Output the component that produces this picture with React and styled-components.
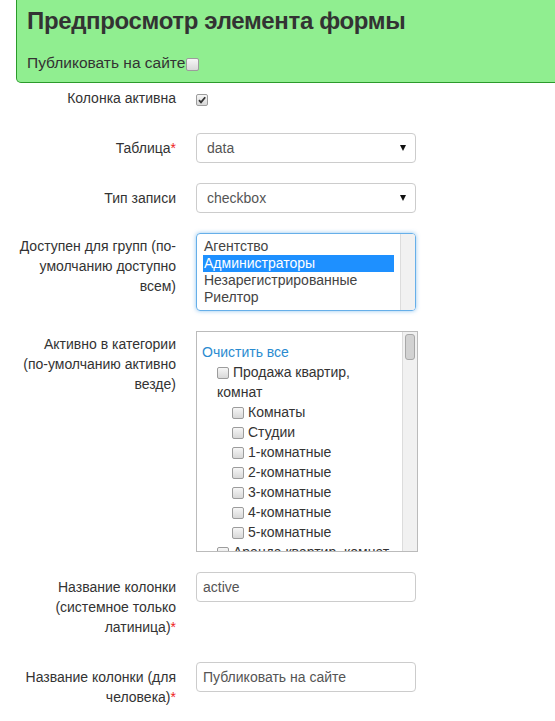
import React from 'react';
import styled, { createGlobalStyle } from 'styled-components';

const GlobalStyle = createGlobalStyle`
  body {
    margin: 0;
    background: #fff;
    color: #333;
    font-family: "Liberation Sans", Arial, sans-serif;
    font-size: 14px;
    overflow-x: hidden;
  }
`;

const Page = styled.div`
  overflow: hidden;
`;

const Header = styled.div`
  margin-left: 16px;
  margin-right: -20px;
  padding: 8px 10px 9px;
  background: #90ee90;
  border: 1px solid #2b9a2b;
  border-top: none;
  border-radius: 0 0 0 5px;
`;

const Title = styled.h3`
  margin: 0 0 19px;
  font-size: 24px;
  line-height: 26px;
  letter-spacing: -0.35px;
  font-weight: bold;
  color: #333;
`;

const PublishLine = styled.div`
  display: flex;
  align-items: center;
  font-size: 15.5px;
  line-height: 20px;
`;

const Form = styled.div``;

const Row = styled.div`
  display: flex;
  align-items: flex-start;
  margin-bottom: 20px;
`;

const Label = styled.div`
  width: 158px;
  margin-left: 18px;
  padding: ${p => p.$top || 5}px 0 5px;
  text-align: right;
  line-height: 20px;
`;

const Req = styled.span`
  color: #e22;
`;

const Control = styled.div`
  margin-left: 20px;
  width: ${p => p.$width || 220}px;
  padding-top: ${p => p.$pad || 0}px;
`;

const Box = styled.span`
  display: inline-block;
  box-sizing: border-box;
  width: ${p => p.$size || 12}px;
  height: ${p => p.$size || 12}px;
  margin: ${p => p.$margin || '0 4px 0 0'};
  vertical-align: -2px;
  border: 1px solid #9c9c9c;
  border-radius: 2px;
  background: linear-gradient(#f6f6f6, #d8d8d8);
  position: relative;
`;

const Check = () => (
  <svg width="10" height="10" viewBox="0 0 10 10" style={{ position: 'absolute', left: 0, top: 0 }}>
    <path d="M2 5.2 L4 7.3 L8.2 2.2" fill="none" stroke="#333" strokeWidth="1.8" />
  </svg>
);

const Select = styled.div`
  box-sizing: border-box;
  height: 30px;
  padding: 0 9px 0 10px;
  display: flex;
  align-items: center;
  justify-content: space-between;
  border: 1px solid #ccc;
  border-radius: 4px;
  color: #555;
`;

const Arrow = styled.span`
  width: 0;
  height: 0;
  border-left: 3px solid transparent;
  border-right: 3px solid transparent;
  border-top: 6px solid #111;
`;

const MultiSelect = styled.div`
  box-sizing: border-box;
  height: 78px;
  display: flex;
  border: 1px solid #66afe9;
  border-radius: 4px;
  box-shadow: 0 0 4px rgba(102, 175, 233, 0.7);
  overflow: hidden;
`;

const OptionList = styled.div`
  flex: 1;
  padding: 4px 6px;
`;

const Option = styled.div`
  line-height: 17px;
  padding-left: 1px;
  color: ${p => (p.$selected ? '#fff' : '#444')};
  background: ${p => (p.$selected ? '#1e90ff' : 'transparent')};
`;

const Track = styled.div`
  width: 15px;
  flex: none;
  background: #f1f1f1;
  border-left: 1px solid #dcdcdc;
  box-sizing: border-box;
  padding: 2px 2px;
`;

const Thumb = styled.div`
  height: 24px;
  border: 1px solid #a8a8a8;
  border-radius: 3px;
  background: #d2d2d2;
`;

const CategoryBox = styled.div`
  box-sizing: border-box;
  height: 221px;
  display: flex;
  border: 1px solid #bbb;
  overflow: hidden;
`;

const CategoryList = styled.div`
  flex: 1;
  padding: 10px 3px 0 5px;
  line-height: 20px;
`;

const ClearLink = styled.a`
  color: #2a8bd0;
  text-decoration: none;
`;

const Item = styled.div`
  padding-left: ${p => p.$level * 15}px;
`;

const Input = styled.input`
  box-sizing: border-box;
  width: 100%;
  height: 30px;
  padding: 0 6px;
  border: 1px solid #ccc;
  border-radius: 4px;
  font-family: inherit;
  font-size: 14px;
  color: #555;
  outline: none;
`;

const groups = ['Агентство', 'Администраторы', 'Незарегистрированные', 'Риелтор'];
const rooms = ['Комнаты', 'Студии', '1-комнатные', '2-комнатные', '3-комнатные', '4-комнатные', '5-комнатные'];

export default function App() {
  return (
    <Page>
      <GlobalStyle />
      <Header>
        <Title>Предпросмотр элемента формы</Title>
        <PublishLine>
          Публиковать на сайте<Box $size={13} $margin="3px 0 0 1px" />
        </PublishLine>
      </Header>
      <Form>
        <Row>
          <Label>Колонка активна</Label>
          <Control $pad={8}>
            <Box $margin="0">
              <Check />
            </Box>
          </Control>
        </Row>
        <Row>
          <Label>Таблица<Req>*</Req></Label>
          <Control>
            <Select>data<Arrow /></Select>
          </Control>
        </Row>
        <Row>
          <Label>Тип записи</Label>
          <Control>
            <Select>checkbox<Arrow /></Select>
          </Control>
        </Row>
        <Row>
          <Label $top={3}>Доступен для групп (по-умолчанию доступно всем)</Label>
          <Control>
            <MultiSelect>
              <OptionList>
                {groups.map(g => (
                  <Option key={g} $selected={g === 'Администраторы'}>{g}</Option>
                ))}
              </OptionList>
              <Track />
            </MultiSelect>
          </Control>
        </Row>
        <Row>
          <Label $top={3}>Активно в категории (по-умолчанию активно везде)</Label>
          <Control $width={222}>
            <CategoryBox>
              <CategoryList>
                <ClearLink href="#">Очистить все</ClearLink>
                <Item $level={1}><Box />Продажа квартир, комнат</Item>
                {rooms.map(r => (
                  <Item key={r} $level={2}><Box />{r}</Item>
                ))}
                <Item $level={1}><Box />Аренда квартир, комнат</Item>
              </CategoryList>
              <Track>
                <Thumb />
              </Track>
            </CategoryBox>
          </Control>
        </Row>
        <Row>
          <Label>Название колонки (системное только латиница)<Req>*</Req></Label>
          <Control>
            <Input defaultValue="active" />
          </Control>
        </Row>
        <Row>
          <Label>Название колонки (для человека)<Req>*</Req></Label>
          <Control>
            <Input defaultValue="Публиковать на сайте" />
          </Control>
        </Row>
      </Form>
    </Page>
  );
}
